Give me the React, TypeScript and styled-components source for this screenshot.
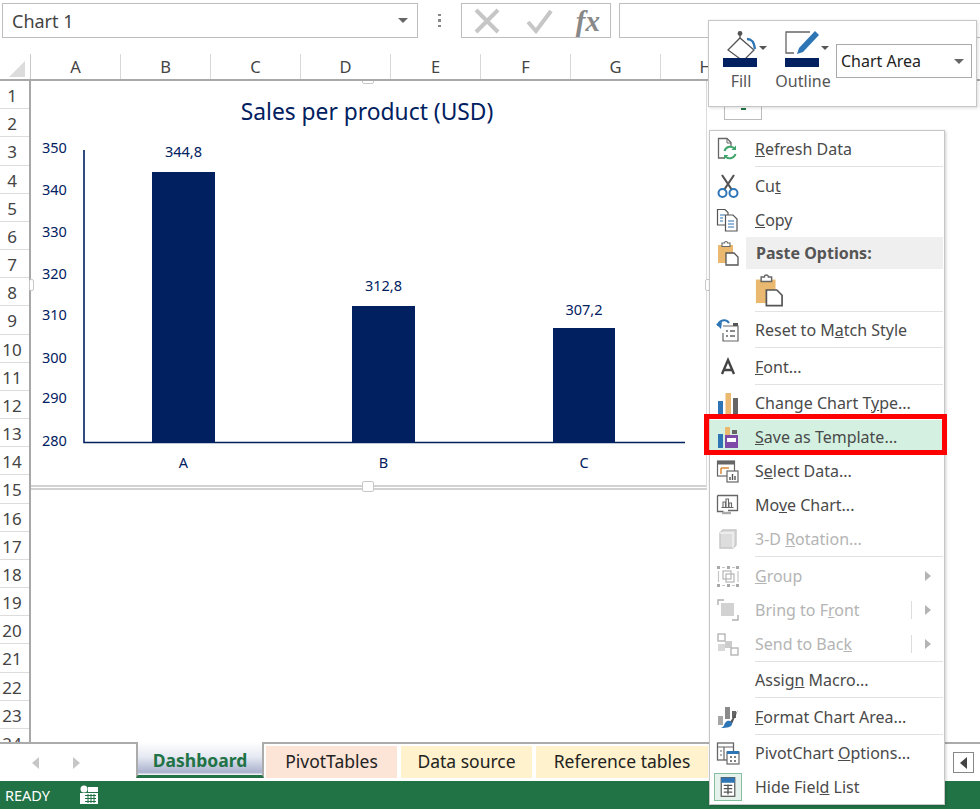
import React from 'react';
import styled, { createGlobalStyle } from 'styled-components';

const NAVY = '#002060';
const UI_FONT = '"Noto Sans", "Open Sans", sans-serif';

const GlobalStyle = createGlobalStyle`
  html, body {
    margin: 0;
    padding: 0;
    background: #fff;
    font-family: ${UI_FONT};
  }
`;

const columns = ['A', 'B', 'C', 'D', 'E', 'F', 'G', 'H'];
const rows = Array.from({ length: 24 }, (_, i) => i + 1);
const ticks = [
  { label: '350', y: 153 },
  { label: '340', y: 195 },
  { label: '330', y: 237 },
  { label: '320', y: 279 },
  { label: '310', y: 320 },
  { label: '300', y: 363 },
  { label: '290', y: 403 },
  { label: '280', y: 446 },
];
const bars = [
  { name: 'A', value: '344,8', x: 152, top: 172, width: 63, labelY: 157 },
  { name: 'B', value: '312,8', x: 352, top: 306, width: 63, labelY: 291 },
  { name: 'C', value: '307,2', x: 553, top: 328, width: 62, labelY: 315 },
];

const Glyph: React.FC<{ children: React.ReactNode; size?: number }> = ({ children, size = 26 }) => (
  <svg width={size} height={size} viewBox="0 0 26 26" fill="none">
    {children}
  </svg>
);

const RefreshIcon = () => (
  <Glyph>
    <path d="M10 22H3.5V2.5H12l4 4V10" stroke="#666" strokeWidth="1.3" />
    <path d="M12 2.5V7h4" stroke="#666" strokeWidth="1" />
    <path d="M9.5 15a6 6 0 0 1 10.5-2" stroke="#3fa56c" strokeWidth="2" />
    <path d="M21 9.5V14h-4.5z" fill="#3fa56c" />
    <path d="M20.5 18a6 6 0 0 1-10.5 2" stroke="#3fa56c" strokeWidth="2" />
    <path d="M9 23.5V19h4.5z" fill="#3fa56c" />
  </Glyph>
);
const CutIcon = () => (
  <Glyph>
    <path d="M7 2l10 15M19 2L9 17" stroke="#555" strokeWidth="2.2" />
    <circle cx="7.5" cy="20" r="4" stroke="#2e75b6" strokeWidth="2" />
    <circle cx="18.5" cy="20" r="4" stroke="#2e75b6" strokeWidth="2" />
  </Glyph>
);
const CopyIcon = () => (
  <Glyph>
    <path d="M10 18H2.5V2.5H10l3 3V8" stroke="#555" strokeWidth="1.2" />
    <path d="M5 8h5M5 11h3M5 14h3" stroke="#2e75b6" strokeWidth="1.2" />
    <path d="M10.5 8H18l4 4v12H10.5z" fill="#fff" stroke="#555" strokeWidth="1.2" />
    <path d="M13 14h6M13 17h6M13 20h6" stroke="#2e75b6" strokeWidth="1.2" />
  </Glyph>
);
const PasteIcon: React.FC<{ size?: number }> = ({ size = 26 }) => (
  <Glyph size={size}>
    <path d="M3 5h15v18H3z" fill="#eab96f" />
    <path d="M7 5V3h2.5a1.5 1.5 0 0 1 3 0H15v3.5H7z" fill="#fff" stroke="#666" strokeWidth="1.1" />
    <path d="M11 13h8l4 4v8H11z" fill="#fff" stroke="#555" strokeWidth="1.3" />
  </Glyph>
);
const ResetIcon = () => (
  <Glyph>
    <path d="M8 9h15v15H8v-8" fill="#fff" stroke="#666" strokeWidth="1.2" />
    <rect x="18" y="6" width="5" height="3" fill="#555" />
    <path d="M11 14h2M15 14h5M11 19h2M15 19h5" stroke="#666" strokeWidth="1.4" />
    <path d="M3 9a6 6 0 0 1 11-3" stroke="#2e75b6" strokeWidth="2" />
    <path d="M1 7l6-2-1 7z" fill="#2e75b6" />
  </Glyph>
);
const FontIcon = () => (
  <Glyph>
    <path d="M7 20L13 6l6 14M9 16h8" stroke="#444" strokeWidth="2.4" />
  </Glyph>
);
const ChartTypeIcon = () => (
  <Glyph>
    <rect x="3" y="11" width="5" height="13" fill="#2e75b6" />
    <rect x="10.5" y="3" width="5.5" height="21" fill="#eab96f" />
    <rect x="18" y="8" width="5" height="16" fill="#666" />
  </Glyph>
);
const TemplateIcon = () => (
  <Glyph>
    <rect x="3" y="10" width="5" height="14" fill="#2e75b6" />
    <rect x="10" y="3" width="5" height="8" fill="#eab96f" />
    <rect x="17" y="6" width="5" height="4" fill="#666" />
    <rect x="10" y="11" width="13" height="13" fill="#7d4aa8" />
    <rect x="12" y="14" width="9" height="4" fill="#fff" />
  </Glyph>
);
const SelectDataIcon = () => (
  <Glyph>
    <rect x="2.5" y="3" width="17" height="15" fill="#fff" stroke="#666" strokeWidth="1.2" />
    <rect x="2.5" y="3" width="17" height="3.5" fill="#666" />
    <path d="M6 10h8M6 10v6" stroke="#d98a35" strokeWidth="1.5" />
    <rect x="12" y="13" width="11" height="11" fill="#fff" stroke="#666" strokeWidth="1.2" />
    <path d="M15 22v-3M17.5 22v-6M20 22v-4" stroke="#555" strokeWidth="1.4" />
  </Glyph>
);
const MoveChartIcon = () => (
  <Glyph>
    <path d="M2.5 3.5h20v15H13M2.5 3.5v16h6" stroke="#666" strokeWidth="1.3" />
    <path d="M8 15V10h2.5v5M11 15V7h2.5v8M14 15v-4h2.5v4M6.5 15.5h12" stroke="#666" strokeWidth="1.1" />
    <path d="M7 21h9" stroke="#aaa" strokeWidth="2.4" />
  </Glyph>
);
const RotationIcon = () => (
  <Glyph>
    <path d="M5 7l3-3h13v15l-3 3H5z" fill="#ddd" stroke="#c6c6c6" strokeWidth="1.4" />
    <path d="M5 7h13v15" stroke="#f2f2f2" strokeWidth="1.4" />
  </Glyph>
);
const GroupIcon = () => (
  <Glyph>
    <g fill="#aaa">
      <rect x="2" y="3" width="3" height="3" />
      <rect x="12" y="3" width="3" height="3" />
      <rect x="21" y="3" width="3" height="3" />
      <rect x="2" y="21" width="3" height="3" />
      <rect x="12" y="21" width="3" height="3" />
      <rect x="21" y="21" width="3" height="3" />
    </g>
    <path d="M3.5 8v11M23 8v11M7 4.5h3M17 4.5h3M7 22.5h3M17 22.5h3" stroke="#c6c6c6" strokeWidth="1.2" />
    <rect x="8" y="8" width="8" height="8" stroke="#b5b5b5" strokeWidth="1.2" />
    <rect x="11" y="11" width="8" height="8" stroke="#b5b5b5" strokeWidth="1.2" />
  </Glyph>
);
const BringIcon = () => (
  <Glyph>
    <path d="M3 8V3h6M23 18v5h-6" stroke="#b0b0b0" strokeWidth="1.4" />
    <rect x="6" y="6" width="13" height="13" fill="#d2d2d2" />
  </Glyph>
);
const SendIcon = () => (
  <Glyph>
    <rect x="3" y="3" width="7" height="7" stroke="#b0b0b0" strokeWidth="1.3" />
    <rect x="10" y="10" width="7" height="7" fill="#ccc" />
    <rect x="3" y="13" width="7" height="7" fill="#d8d8d8" />
    <rect x="16" y="17" width="7" height="7" stroke="#b0b0b0" strokeWidth="1.3" />
  </Glyph>
);
const FormatAreaIcon = () => (
  <Glyph>
    <rect x="3" y="12" width="5" height="9" fill="#a6a6a6" />
    <rect x="10" y="3" width="5" height="12" fill="#8a8a8a" />
    <rect x="17" y="7" width="4" height="7" fill="#666" />
    <path d="M23 6l-8 12 2 2z" fill="#555" />
    <path d="M12 17c3-1 5 0 5 3 0 3-5 4-11 4 3-1 3-3 4-5z" fill="#2e75b6" />
  </Glyph>
);
const PivotOptionsIcon = () => (
  <Glyph>
    <rect x="2.5" y="3" width="16" height="17" fill="#fff" stroke="#666" strokeWidth="1.3" />
    <path d="M2.5 7h16M9 7v13M5 11h2M5 15h2" stroke="#666" strokeWidth="1.2" />
    <rect x="12" y="12" width="12" height="12" fill="#fff" stroke="#666" strokeWidth="1.2" />
    <rect x="12" y="11" width="12" height="3" fill="#2e75b6" />
    <path d="M15 17h2M19 17h2M15 21h2M19 21h2" stroke="#555" strokeWidth="1.6" />
  </Glyph>
);
const FieldListIcon = () => (
  <Glyph size={22}>
    <rect x="5" y="2" width="16" height="22" fill="#fff" stroke="#555" strokeWidth="1.4" />
    <rect x="5" y="2" width="16" height="6" fill="#2e75b6" />
    <path d="M8 11h10M8 15h10M8 19h10M13 10v12" stroke="#555" strokeWidth="1.6" />
  </Glyph>
);

type MenuEntry =
  | { kind: 'sep' }
  | { kind: 'heading'; label: string; icon: React.ReactNode }
  | { kind: 'paste' }
  | {
      kind: 'item';
      label: string;
      icon?: React.ReactNode;
      disabled?: boolean;
      arrow?: boolean;
      split?: boolean;
      selected?: boolean;
      checked?: boolean;
    };

// & marks the access key, same as the real menu resource strings
const menu: MenuEntry[] = [
  { kind: 'item', label: '&Refresh Data', icon: <RefreshIcon /> },
  { kind: 'sep' },
  { kind: 'item', label: 'Cu&t', icon: <CutIcon /> },
  { kind: 'item', label: '&Copy', icon: <CopyIcon /> },
  { kind: 'heading', label: 'Paste Options:', icon: <PasteIcon /> },
  { kind: 'paste' },
  { kind: 'sep' },
  { kind: 'item', label: 'Reset to M&atch Style', icon: <ResetIcon /> },
  { kind: 'sep' },
  { kind: 'item', label: '&Font...', icon: <FontIcon /> },
  { kind: 'sep' },
  { kind: 'item', label: 'Change Chart T&ype...', icon: <ChartTypeIcon /> },
  { kind: 'item', label: '&Save as Template...', icon: <TemplateIcon />, selected: true },
  { kind: 'item', label: 'S&elect Data...', icon: <SelectDataIcon /> },
  { kind: 'item', label: 'Mo&ve Chart...', icon: <MoveChartIcon /> },
  { kind: 'item', label: '3-D &Rotation...', icon: <RotationIcon />, disabled: true },
  { kind: 'sep' },
  { kind: 'item', label: '&Group', icon: <GroupIcon />, disabled: true, arrow: true },
  { kind: 'item', label: 'Bring to F&ront', icon: <BringIcon />, disabled: true, arrow: true, split: true },
  { kind: 'item', label: 'Send to Bac&k', icon: <SendIcon />, disabled: true, arrow: true, split: true },
  { kind: 'sep' },
  { kind: 'item', label: 'Assig&n Macro...' },
  { kind: 'sep' },
  { kind: 'item', label: '&Format Chart Area...', icon: <FormatAreaIcon /> },
  { kind: 'sep' },
  { kind: 'item', label: 'PivotChart &Options...', icon: <PivotOptionsIcon /> },
  { kind: 'item', label: 'Hide Fiel&d List', icon: <FieldListIcon />, checked: true },
];

const AccessLabel: React.FC<{ text: string }> = ({ text }) => {
  const i = text.indexOf('&');
  if (i < 0) return <>{text}</>;
  return (
    <>
      {text.slice(0, i)}
      <u>{text[i + 1]}</u>
      {text.slice(i + 2)}
    </>
  );
};

const App: React.FC = () => (
  <Page>
    <GlobalStyle />
    <TopBar>
      <NameBox>
        Chart 1
        <Caret />
      </NameBox>
      <Dots>
        <i />
        <i />
        <i />
      </Dots>
      <FormulaButtons>
        <svg width="30" height="26" viewBox="0 0 30 26">
          <path d="M4 2l22 22M26 2L4 24" stroke="#c6c6c6" strokeWidth="4" />
        </svg>
        <svg width="30" height="26" viewBox="0 0 30 26">
          <path d="M4 14l8 9L27 3" stroke="#c6c6c6" strokeWidth="4" fill="none" />
        </svg>
        <FxLabel>fx</FxLabel>
      </FormulaButtons>
      <FormulaInput />
    </TopBar>

    <ColumnBar>
      <Corner>
        <svg width="16" height="16" viewBox="0 0 16 16">
          <path d="M16 0v16H0z" fill="#dcdcdc" />
        </svg>
      </Corner>
      {columns.map((c) => (
        <ColumnHead key={c}>{c}</ColumnHead>
      ))}
    </ColumnBar>

    <SheetBody>
      <RowRail>
        {rows.map((r) => (
          <RowHead key={r}>{r}</RowHead>
        ))}
      </RowRail>
      <ChartFrame>
        <svg width="675" height="404" viewBox="31 81 675 404" fontFamily={UI_FONT}>
          <text x="367" y="120" fontSize="22.8" fill={NAVY} textAnchor="middle">
            Sales per product (USD)
          </text>
          <path d="M84 150V442.5H685" stroke={NAVY} strokeWidth="1.6" fill="none" />
          {ticks.map((t) => (
            <text key={t.label} x="42" y={t.y} fontSize="14.5" fill={NAVY}>
              {t.label}
            </text>
          ))}
          {bars.map((b) => (
            <g key={b.name}>
              <rect x={b.x} y={b.top} width={b.width} height={442 - b.top} fill={NAVY} />
              <text x={b.x + b.width / 2} y={b.labelY} fontSize="14.5" fill={NAVY} textAnchor="middle">
                {b.value}
              </text>
              <text x={b.x + b.width / 2} y="468" fontSize="14.5" fill={NAVY} textAnchor="middle">
                {b.name}
              </text>
            </g>
          ))}
        </svg>
        <Handle $side="top" />
        <Handle $side="bottom" />
        <Handle $side="left" />
        <Handle $side="right" />
      </ChartFrame>
      <SideButton>
        <i />
      </SideButton>
    </SheetBody>

    <TabRow>
      <TabNav>
        <svg width="8" height="12" viewBox="0 0 8 12">
          <path d="M7 0v12L0 6z" fill="#c6c6c6" />
        </svg>
        <svg width="8" height="12" viewBox="0 0 8 12">
          <path d="M1 0v12l7-6z" fill="#c6c6c6" />
        </svg>
      </TabNav>
      <ActiveTab>Dashboard</ActiveTab>
      <TabStrip>
        <SheetTab $bg="#fce4d6" $width={131}>
          PivotTables
        </SheetTab>
        <SheetTab $bg="#fff2cc" $width={131}>
          Data source
        </SheetTab>
        <SheetTab $bg="#fff2cc" $width={172}>
          Reference tables
        </SheetTab>
      </TabStrip>
      <ScrollBox>
        <svg width="8" height="12" viewBox="0 0 8 12">
          <path d="M7 0v12L0 6z" fill="#444" />
        </svg>
      </ScrollBox>
    </TabRow>

    <StatusBar>
      <span>READY</span>
      <svg width="20" height="22" viewBox="0 0 20 22">
        <circle cx="5" cy="5" r="3.5" fill="#fff" />
        <rect x="1" y="9" width="18" height="11" fill="#fff" />
        <rect x="9" y="3" width="10" height="5" fill="#fff" />
        <path d="M6 11.5h11M6 14.5h11M6 17.5h11M9 10v9M12 10v9M15 10v9" stroke="#217346" strokeWidth="1" />
      </svg>
    </StatusBar>

    <MiniToolbar>
      <ToolButton>
        <ToolIcon>
          <svg width="46" height="38" viewBox="0 0 46 38">
            <path d="M6 20L18 8l14 12-11 11z" fill="#fff" stroke="#555" strokeWidth="1.3" />
            <path d="M18 8V3" stroke="#555" strokeWidth="1.3" />
            <circle cx="18" cy="3.5" r="2.4" fill="#555" />
            <path d="M25 9c5 0 7 3 8 10" stroke="#2e75b6" strokeWidth="2.4" fill="none" />
            <rect x="1" y="28" width="34" height="9" fill={NAVY} />
            <path d="M37 16h8l-4 4z" fill="#555" />
          </svg>
        </ToolIcon>
        Fill
      </ToolButton>
      <ToolButton>
        <ToolIcon>
          <svg width="46" height="38" viewBox="0 0 46 38">
            <path d="M26 2H2v21h8" stroke="#666" strokeWidth="1.3" fill="none" />
            <path d="M31 1l4 4-16 17-6 2 2-6z" fill="#2e75b6" />
            <rect x="1" y="28" width="34" height="9" fill={NAVY} />
            <path d="M37 16h8l-4 4z" fill="#555" />
          </svg>
        </ToolIcon>
        Outline
      </ToolButton>
      <AreaSelect>
        Chart Area
        <Caret />
      </AreaSelect>
    </MiniToolbar>

    <ContextMenu>
      {menu.map((entry, i) => {
        if (entry.kind === 'sep') return <Separator key={i} />;
        if (entry.kind === 'heading')
          return (
            <HeadingRow key={i}>
              <IconCell>{entry.icon}</IconCell>
              <HeadingLabel>{entry.label}</HeadingLabel>
            </HeadingRow>
          );
        if (entry.kind === 'paste')
          return (
            <PasteRow key={i}>
              <PasteIcon size={34} />
            </PasteRow>
          );
        return (
          <Item key={i} $disabled={entry.disabled} $selected={entry.selected}>
            <IconCell $checked={entry.checked}>{entry.icon}</IconCell>
            <ItemLabel>
              <AccessLabel text={entry.label} />
            </ItemLabel>
            {entry.split && <SplitLine />}
            {entry.arrow && <Arrow />}
          </Item>
        );
      })}
    </ContextMenu>
  </Page>
);

const Page = styled.div`
  position: relative;
  width: 980px;
  height: 809px;
  overflow: hidden;
  display: flex;
  flex-direction: column;
  background: #fff;
  color: #444;
`;

const TopBar = styled.div`
  height: 54px;
  flex: none;
  box-sizing: border-box;
  padding: 3px 0 0 2px;
  display: flex;
  align-items: flex-start;
`;

const NameBox = styled.div`
  width: 416px;
  height: 35px;
  box-sizing: border-box;
  border: 1.5px solid #bdbdbd;
  padding: 0 9px;
  display: flex;
  align-items: center;
  justify-content: space-between;
  font-size: 18px;
`;

const Caret = styled.span`
  width: 0;
  height: 0;
  border-left: 5px solid transparent;
  border-right: 5px solid transparent;
  border-top: 5px solid #666;
`;

const Dots = styled.div`
  width: 43px;
  height: 35px;
  display: flex;
  flex-direction: column;
  align-items: center;
  justify-content: center;
  gap: 3px;

  i {
    width: 2.5px;
    height: 2.5px;
    background: #888;
  }
`;

const FormulaButtons = styled.div`
  width: 150px;
  height: 35px;
  box-sizing: border-box;
  border: 1.5px solid #bdbdbd;
  padding: 0 4px 0 10px;
  display: flex;
  align-items: center;
  justify-content: space-between;
`;

const FxLabel = styled.span`
  font-family: 'Liberation Serif', serif;
  font-style: italic;
  font-weight: 700;
  font-size: 29px;
  line-height: 30px;
  color: #888;
  padding-right: 6px;
`;

const FormulaInput = styled.div`
  flex: 1;
  height: 35px;
  margin-left: 8px;
  box-sizing: border-box;
  border: 1.5px solid #bdbdbd;
  border-right: 0;
`;

const ColumnBar = styled.div`
  height: 27px;
  flex: none;
  display: flex;
  box-sizing: border-box;
  border-bottom: 2px solid #a8a8a8;
`;

const Corner = styled.div`
  width: 31px;
  flex: none;
  box-sizing: border-box;
  border-right: 1.5px solid #c8c8c8;
  padding: 6px 0 0 9px;
`;

const ColumnHead = styled.div`
  width: 90px;
  flex: none;
  box-sizing: border-box;
  border-right: 1.5px solid #d8d8d8;
  text-align: center;
  font-size: 16.5px;
  line-height: 26px;
`;

const SheetBody = styled.div`
  position: relative;
  flex: 1;
  min-height: 0;
  overflow: hidden;
`;

const RowRail = styled.div`
  width: 31px;
  box-sizing: border-box;
  border-right: 2px solid #a8a8a8;
`;

const RowHead = styled.div`
  height: 28.18px;
  box-sizing: border-box;
  border-bottom: 1.5px solid #dcdcdc;
  padding-right: 5px;
  text-align: center;
  font-size: 17px;
  line-height: 30px;
`;

const ChartFrame = styled.div`
  position: absolute;
  left: 31px;
  top: 0;
  width: 675px;
  height: 404px;
  background: #fff;
  border-right: 1.5px solid #dcdcdc;
  border-bottom: 5px double #d2d2d2;

  svg {
    display: block;
  }
`;

const handlePlace = {
  top: 'left: 331px; top: -2px; width: 10px; height: 3px;',
  bottom: 'left: 331px; bottom: -7px; width: 10px; height: 9px;',
  left: 'left: -2px; top: 198px; width: 3px; height: 10px;',
  right: 'right: -5px; top: 198px; width: 4px; height: 10px;',
};

const Handle = styled.span<{ $side: keyof typeof handlePlace }>`
  position: absolute;
  ${(p) => handlePlace[p.$side]}
  background: #fff;
  border: 1px solid #c8c8c8;
  border-radius: 2px;
`;

const SideButton = styled.div`
  position: absolute;
  left: 724px;
  top: 18px;
  width: 38px;
  height: 21px;
  box-sizing: border-box;
  border: 1px solid #bcbcbc;
  display: flex;
  justify-content: center;
  padding-top: 8px;

  i {
    width: 5px;
    height: 2px;
    background: #217346;
  }
`;

const TabRow = styled.div`
  height: 39px;
  flex: none;
  display: flex;
  background: #fff;
`;

const TabNav = styled.div`
  width: 136px;
  height: 100%;
  box-sizing: border-box;
  border-top: 2px solid #ababab;
  padding: 13px 56px 0 32px;
  display: flex;
  align-items: flex-start;
  justify-content: space-between;
`;

const ActiveTab = styled.div`
  width: 128px;
  height: 36px;
  box-sizing: border-box;
  border-left: 2px solid #ababab;
  border-right: 2px solid #ababab;
  border-bottom: 3px solid #217346;
  padding-top: 3px;
  background: linear-gradient(#fff 0%, #e6e9f2 45%, #a9b2cd 92%, #fff 100%);
  color: #217346;
  font-size: 17.5px;
  font-weight: 700;
  text-align: center;
  line-height: 30px;
`;

const TabStrip = styled.div`
  flex: 1;
  height: 100%;
  box-sizing: border-box;
  border-top: 2px solid #ababab;
  padding: 2px 0 3px 2px;
  display: flex;
  gap: 4px;
`;

const SheetTab = styled.div<{ $bg: string; $width: number }>`
  width: ${(p) => p.$width}px;
  background: ${(p) => p.$bg};
  color: #222;
  font-size: 17.5px;
  text-align: center;
  line-height: 31px;
`;

const ScrollBox = styled.div`
  position: absolute;
  left: 953px;
  top: 752px;
  width: 21px;
  height: 21px;
  box-sizing: border-box;
  border: 1.5px solid #888;
  display: flex;
  align-items: center;
  justify-content: center;
`;

const StatusBar = styled.div`
  height: 28px;
  flex: none;
  box-sizing: border-box;
  background: #217346;
  padding: 0 0 0 5px;
  display: flex;
  align-items: center;
  gap: 29px;
  color: #fff;
  font-size: 14.5px;
`;

const MiniToolbar = styled.div`
  position: absolute;
  left: 708px;
  top: 20px;
  width: 269px;
  height: 87px;
  box-sizing: border-box;
  background: #fff;
  border: 1.5px solid #c6c6c6;
  box-shadow: 1px 1px 3px rgba(0, 0, 0, 0.15);
  padding: 9px 0 0 13px;
  display: flex;
  align-items: flex-start;
  gap: 24px;
`;

const ToolButton = styled.div`
  width: 38px;
  display: flex;
  flex-direction: column;
  align-items: center;
  font-size: 16px;
  line-height: 20px;
  white-space: nowrap;
  color: #555;
`;

const ToolIcon = styled.div`
  height: 41px;
  align-self: flex-start;
`;

const AreaSelect = styled.div`
  width: 136px;
  height: 34px;
  margin: 14px 0 0 -10px;
  box-sizing: border-box;
  border: 1.5px solid #aaa;
  padding: 0 7px 0 4px;
  display: flex;
  align-items: center;
  justify-content: space-between;
  color: #222;
  font-size: 16px;
`;

const ContextMenu = styled.div`
  position: absolute;
  left: 709px;
  top: 130px;
  width: 236px;
  height: 675px;
  box-sizing: border-box;
  padding-top: 1px;
  background: #fff;
  border: 1.5px solid #c6c6c6;
  box-shadow: 1px 1px 3px rgba(0, 0, 0, 0.2);
`;

const Item = styled.div<{ $disabled?: boolean; $selected?: boolean }>`
  position: relative;
  height: 34px;
  display: flex;
  align-items: center;
  font-size: 16px;
  color: ${(p) => (p.$disabled ? '#b4b4b4' : '#4a4a4a')};
  background: ${(p) => (p.$selected ? '#d3f0e0' : 'transparent')};

  ${(p) =>
    p.$selected &&
    `
    &::after {
      content: '';
      position: absolute;
      inset: -6px -3px -1px -6px;
      border: 5px solid #fe0000;
    }
  `}
`;

const IconCell = styled.div<{ $checked?: boolean }>`
  width: 28px;
  height: 28px;
  margin: 0 13px 0 4px;
  flex: none;
  box-sizing: border-box;
  display: flex;
  align-items: center;
  justify-content: center;
  border: ${(p) => (p.$checked ? '1.5px solid #86bfa0' : '0')};
  background: ${(p) => (p.$checked ? '#e5f3ec' : 'transparent')};
`;

const ItemLabel = styled.span`
  flex: 1;
`;

const SplitLine = styled.span`
  position: absolute;
  left: 201px;
  top: 8px;
  height: 18px;
  width: 1px;
  background: #dcdcdc;
`;

const Arrow = styled.span`
  width: 0;
  height: 0;
  margin-right: 13px;
  border-top: 5px solid transparent;
  border-bottom: 5px solid transparent;
  border-left: 6px solid #b4b4b4;
`;

const HeadingRow = styled.div`
  height: 32px;
  display: flex;
  align-items: center;
`;

const HeadingLabel = styled.div`
  flex: 1;
  height: 100%;
  margin: 0 1px 0 -9px;
  padding-left: 10px;
  background: #efefef;
  font-size: 16px;
  font-weight: 700;
  color: #555;
  line-height: 32px;
`;

const PasteRow = styled.div`
  height: 42px;
  padding-left: 42px;
  display: flex;
  align-items: center;
`;

const Separator = styled.div`
  height: 2.5px;
  margin: 0 1px 0 45px;
  box-sizing: border-box;
  border-top: 1.5px solid #e2e2e2;
`;

export default App;
